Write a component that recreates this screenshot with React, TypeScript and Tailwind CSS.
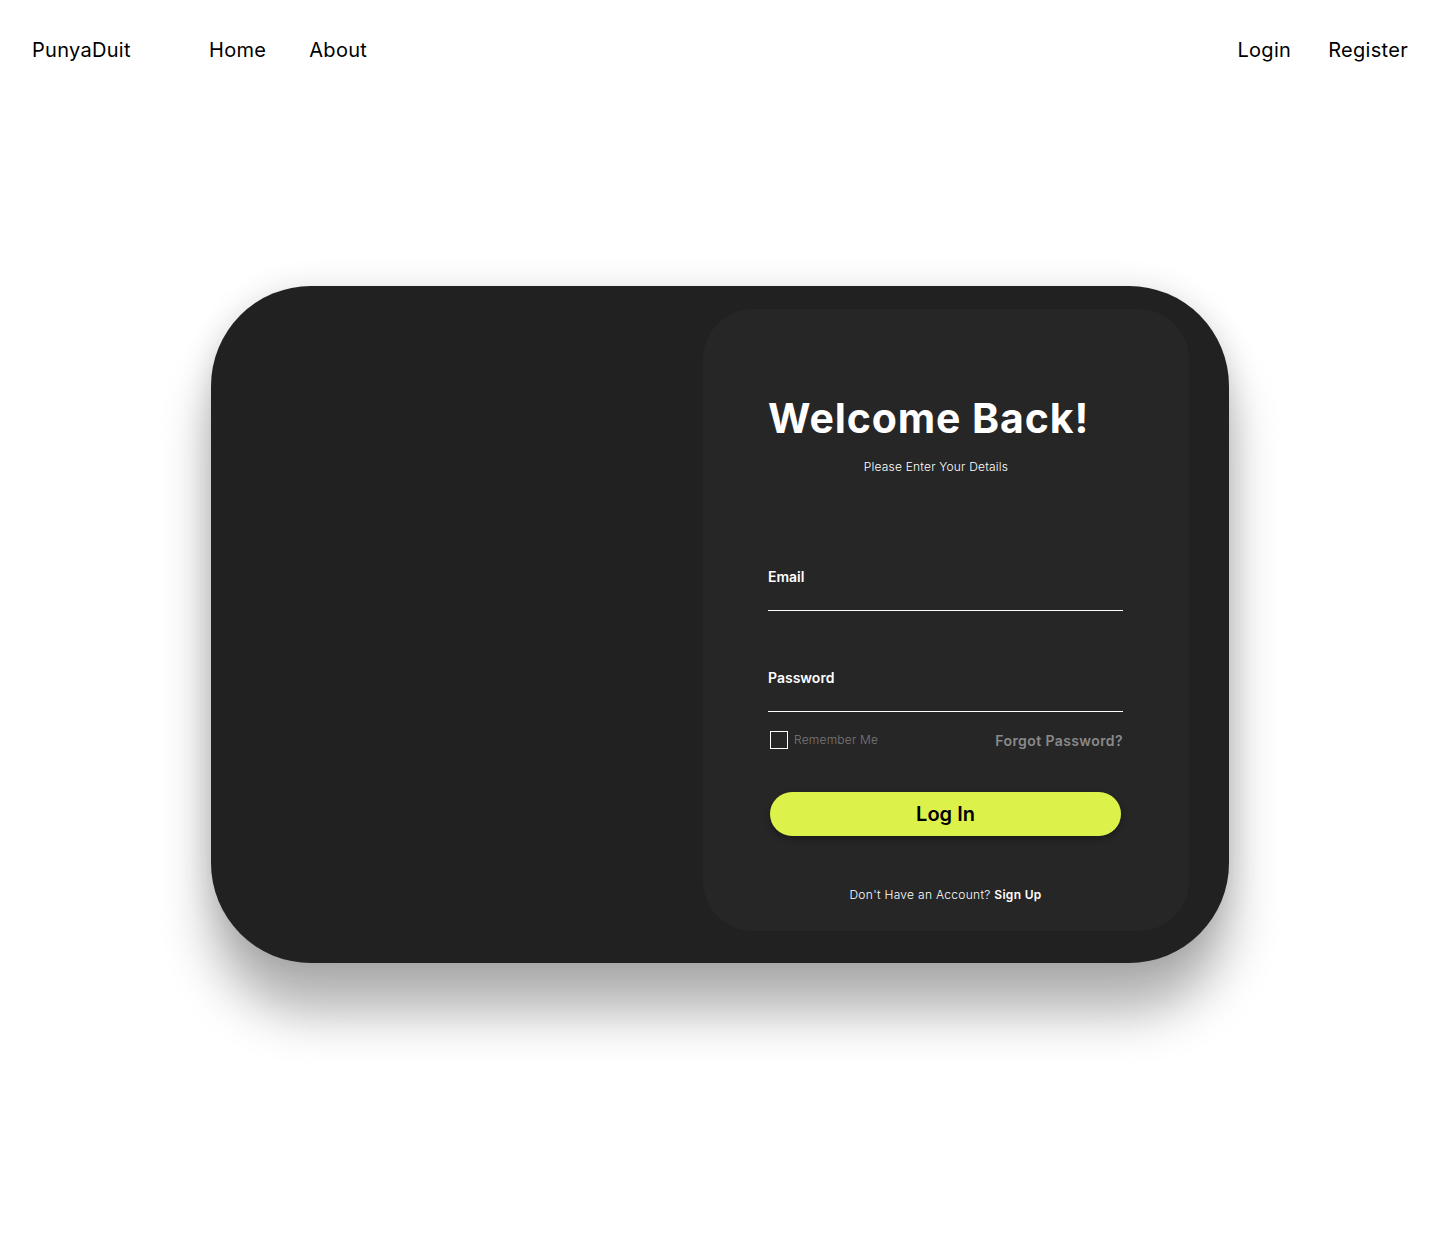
import React from "react";

const font = { fontFamily: "Inter, 'Noto Sans', sans-serif" };

function Navbar() {
  return (
    <header className="flex h-[100px] items-center justify-between px-8 text-[20px] tracking-[0.3px] text-black">
      <div className="flex items-center">
        <span className="w-[177px]">PunyaDuit</span>
        <nav className="flex gap-[43px]">
          <a href="#">Home</a>
          <a href="#">About</a>
        </nav>
      </div>
      <nav className="flex gap-[37px]">
        <a href="#">Login</a>
        <a href="#">Register</a>
      </nav>
    </header>
  );
}

function LoginPanel() {
  return (
    <div className="flex h-[622px] w-[486px] flex-col rounded-[50px] bg-[#262626] pl-[65px] pr-[66px] pt-[89px] text-white">
      <h1 className="text-[41px] font-bold leading-none tracking-[0.9px]">Welcome Back!</h1>
      <p className="mt-[20px] w-[336px] text-center text-[12px] font-light leading-4 tracking-[0.2px]">
        Please Enter Your Details
      </p>

      <label className="mt-[92px] block text-[14px] font-semibold leading-5">Email</label>
      <input
        type="email"
        className="h-[24px] w-full border-b border-white bg-transparent text-[14px] outline-none"
      />

      <label className="mt-[57px] block text-[14px] font-semibold leading-5">Password</label>
      <input
        type="password"
        className="h-[24px] w-full border-b border-white bg-transparent text-[14px] outline-none"
      />

      <div className="mt-[19px] flex h-[18px] items-center justify-between pl-[2px]">
        <label className="flex items-center gap-[6px]">
          <span className="h-[18px] w-[18px] border border-white" />
          <span className="text-[12px] font-light tracking-[0.2px] text-[#7a7a7a]">Remember Me</span>
        </label>
        <a href="#" className="text-[14px] font-semibold tracking-[0.4px] text-[#8a8a8a]">
          Forgot Password?
        </a>
      </div>

      <button className="mx-[2px] mt-[43px] h-[44px] rounded-full bg-[#dcf24a] text-[20px] font-semibold text-black shadow-[0_3px_6px_rgba(0,0,0,0.3)]">
        Log In
      </button>

      <p className="mt-[51px] text-center text-[12px] font-light leading-4 tracking-[0.3px]">
        Don't Have an Account? <span className="font-semibold">Sign Up</span>
      </p>
    </div>
  );
}

export default function App() {
  return (
    <div className="min-h-[1249px] bg-white" style={font}>
      <Navbar />
      <main className="pt-[186px]">
        <div className="mx-auto flex h-[677px] w-[1018px] justify-end rounded-[100px] bg-[#212121] pr-[40px] pt-[23px] shadow-[0_50px_50px_rgba(0,0,0,0.3),0_0_30px_rgba(0,0,0,0.12)]">
          <LoginPanel />
        </div>
      </main>
    </div>
  );
}
